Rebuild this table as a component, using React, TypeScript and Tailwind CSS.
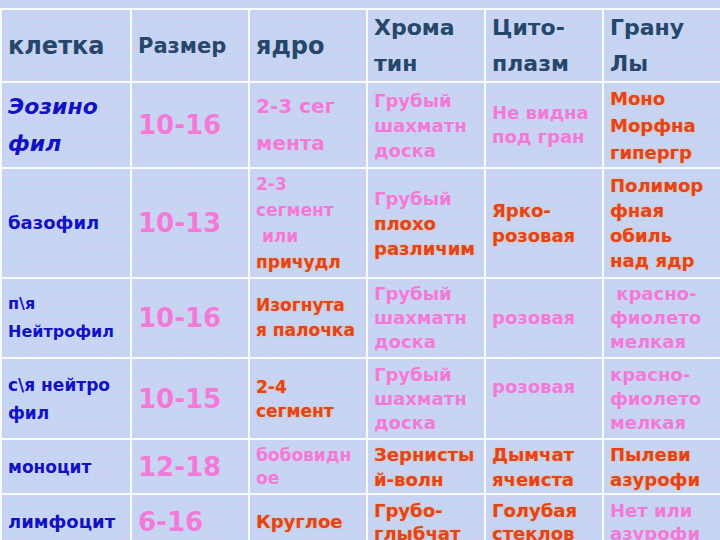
import React from "react";

const H = "text-[#27466b]";
const B = "text-[#1212c4]";
const P = "text-[#f07ad8] [text-shadow:0_0_1px_rgba(255,200,240,0.8)]";
const R = "text-[#e5421e] [text-shadow:0_0_2px_rgba(255,170,40,0.75)]";

// mottled blue/pink paper look of the slide background
const paper =
  "bg-[#c6d6f2] bg-[radial-gradient(circle,rgba(232,196,236,0.55)_0_1px,transparent_2px),radial-gradient(circle,rgba(176,214,250,0.6)_0_1px,transparent_2px)] bg-[length:7px_6px,5px_8px]";

type Line = { t: string; c: string };

function Cell({ lines, size, lh, italic }: { lines: Line[]; size: string; lh: string; italic?: boolean }) {
  return (
    <div className={`flex flex-col justify-center px-1.5 ${paper} font-bold whitespace-pre overflow-hidden ${size} ${lh} ${italic ? "italic" : ""}`}>
      {lines.map((l, i) => (
        <div key={i} className={l.c}>
          {l.t || "\u00a0"}
        </div>
      ))}
    </div>
  );
}

const L = (c: string, ...t: string[]): Line[] => t.map((x) => ({ t: x, c }));

export default function App() {
  return (
    <div
      className={`w-[720px] h-[540px] overflow-hidden pt-2 ${paper}`}
      style={{ fontFamily: '"DejaVu Sans", Verdana, sans-serif' }}
    >
      <div className="grid grid-cols-[128px_116px_116px_116px_116px_116px] grid-rows-[71px_84px_108px_78px_79px_53px_54px] gap-[2px] p-[2px] pr-0 bg-white/90 w-[722px]">
        {/* header */}
        <Cell lines={L(H, "клетка")} size="text-[24px]" lh="leading-[36px]" />
        <Cell lines={L(H, "Размер")} size="text-[21px]" lh="leading-[36px]" />
        <Cell lines={L(H, "ядро")} size="text-[24px]" lh="leading-[36px]" />
        <Cell lines={L(H, "Хрома", "тин")} size="text-[22px]" lh="leading-[36px]" />
        <Cell lines={L(H, "Цито-", "плазм")} size="text-[22px]" lh="leading-[36px]" />
        <Cell lines={L(H, "Грану", "Лы")} size="text-[22px]" lh="leading-[36px]" />

        {/* эозинофил */}
        <Cell lines={L(B, "Эозино", "фил")} size="text-[22px]" lh="leading-[37px]" italic />
        <Cell lines={L(P, "10-16")} size="text-[26px]" lh="leading-[36px]" />
        <Cell lines={L(P, "2-3 сег", "мента")} size="text-[20px]" lh="leading-[37px]" />
        <Cell lines={L(P, "Грубый", "шахматн", "доска")} size="text-[18px]" lh="leading-[25px]" />
        <Cell lines={L(P, "Не видна", "под гран")} size="text-[18px]" lh="leading-[24px]" />
        <Cell lines={L(R, "Моно", "Морфна", "гипергр")} size="text-[18px]" lh="leading-[27px]" />

        {/* базофил */}
        <Cell lines={L(B, "базофил")} size="text-[18px]" lh="leading-[26px]" />
        <Cell lines={L(P, "10-13")} size="text-[26px]" lh="leading-[36px]" />
        <Cell
          lines={[...L(P, "2-3", "сегмент", " или"), ...L(R, "причудл")]}
          size="text-[17px]"
          lh="leading-[26px]"
        />
        <Cell lines={[...L(P, "Грубый"), ...L(R, "плохо", "различим")]} size="text-[18px]" lh="leading-[25px]" />
        <Cell lines={L(R, "Ярко-", "розовая")} size="text-[18px]" lh="leading-[25px]" />
        <Cell lines={L(R, "Полимор", "фная", "обиль", "над ядр")} size="text-[18px]" lh="leading-[25px]" />

        {/* палочкоядерный */}
        <Cell lines={L(B, "п\\я", "Нейтрофил")} size="text-[16px]" lh="leading-[28px]" />
        <Cell lines={L(P, "10-16")} size="text-[26px]" lh="leading-[36px]" />
        <Cell lines={L(R, "Изогнута", "я палочка")} size="text-[17px]" lh="leading-[25px]" />
        <Cell lines={L(P, "Грубый", "шахматн", "доска")} size="text-[18px]" lh="leading-[24px]" />
        <Cell lines={L(P, "розовая")} size="text-[18px]" lh="leading-[24px]" />
        <Cell lines={L(P, " красно-", "фиолето", "мелкая")} size="text-[18px]" lh="leading-[24px]" />

        {/* сегментоядерный */}
        <Cell lines={L(B, "с\\я нейтро", "фил")} size="text-[17px]" lh="leading-[28px]" />
        <Cell lines={L(P, "10-15")} size="text-[26px]" lh="leading-[36px]" />
        <Cell lines={L(R, "2-4", "сегмент")} size="text-[17px]" lh="leading-[24px]" />
        <Cell lines={L(P, "Грубый", "шахматн", "доска")} size="text-[18px]" lh="leading-[24px]" />
        <Cell lines={L(P, "розовая", "")} size="text-[18px]" lh="leading-[25px]" />
        <Cell lines={L(P, "красно-", "фиолето", "мелкая")} size="text-[18px]" lh="leading-[24px]" />

        {/* моноцит */}
        <Cell lines={L(B, "моноцит")} size="text-[17px]" lh="leading-[26px]" />
        <Cell lines={L(P, "12-18")} size="text-[26px]" lh="leading-[36px]" />
        <Cell lines={L(P, "бобовидн", "ое")} size="text-[17px]" lh="leading-[23px]" />
        <Cell lines={L(R, "Зернисты", "й-волн")} size="text-[18px]" lh="leading-[25px]" />
        <Cell lines={L(R, "Дымчат", "ячеиста")} size="text-[18px]" lh="leading-[25px]" />
        <Cell lines={L(R, "Пылеви", "азурофи")} size="text-[18px]" lh="leading-[25px]" />

        {/* лимфоцит */}
        <Cell lines={L(B, "лимфоцит")} size="text-[18px]" lh="leading-[26px]" />
        <Cell lines={L(P, "6-16")} size="text-[26px]" lh="leading-[36px]" />
        <Cell lines={L(R, "Круглое")} size="text-[18px]" lh="leading-[26px]" />
        <Cell lines={L(R, "Грубо-", "глыбчат")} size="text-[18px]" lh="leading-[23px]" />
        <Cell lines={L(R, "Голубая", "стеклов")} size="text-[18px]" lh="leading-[23px]" />
        <Cell lines={L(P, "Нет или", "азурофи")} size="text-[18px]" lh="leading-[23px]" />
      </div>
    </div>
  );
}
